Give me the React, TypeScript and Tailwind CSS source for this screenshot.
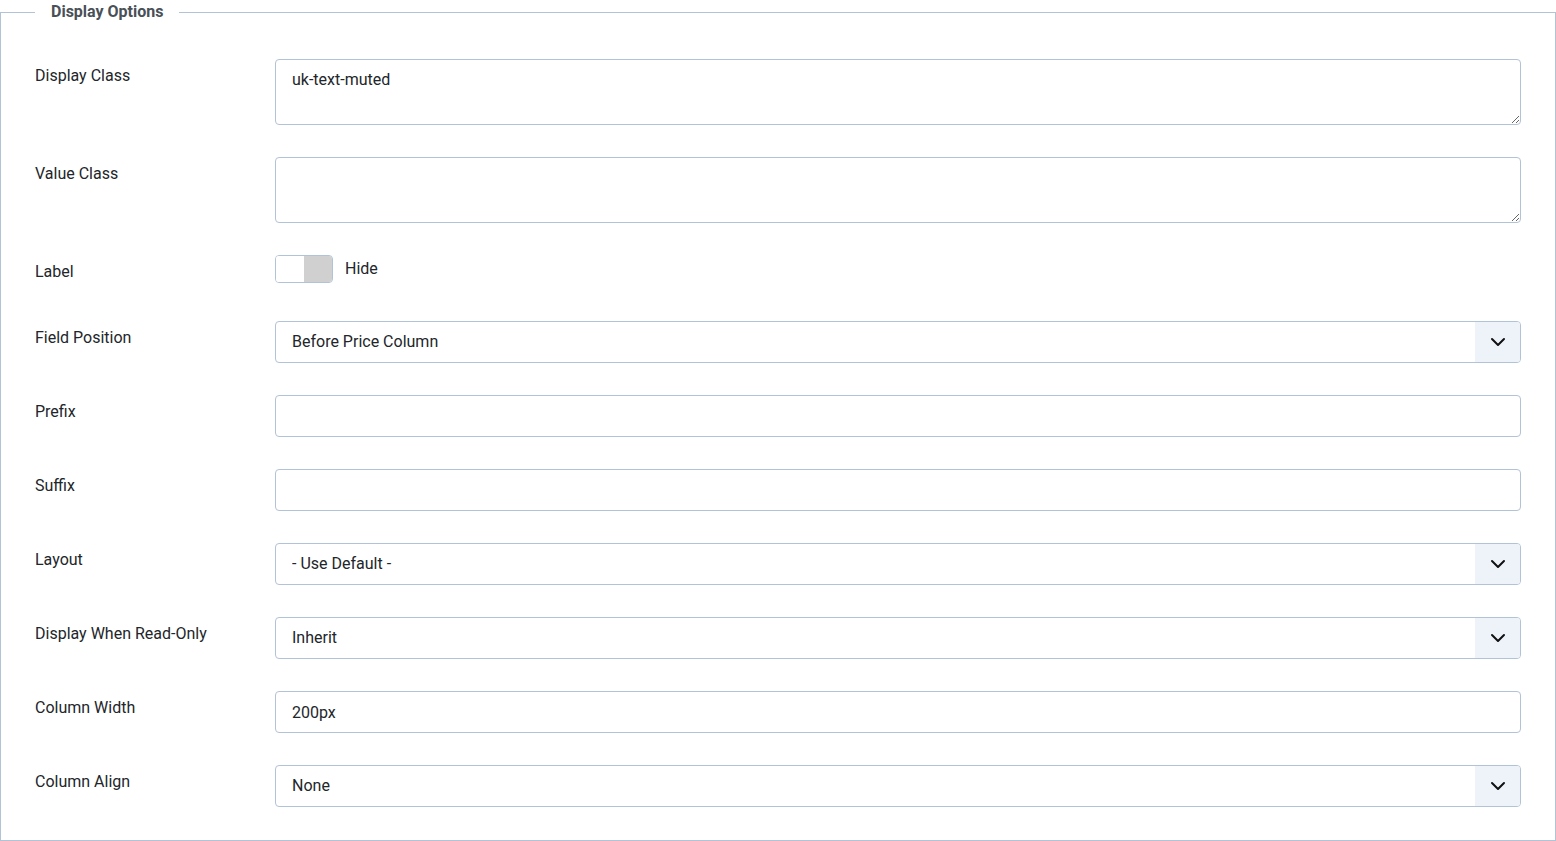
import { useState } from 'react';

type Row =
  | { label: string; kind: 'textarea'; value: string }
  | { label: string; kind: 'toggle' }
  | { label: string; kind: 'select'; value: string; options: string[] }
  | { label: string; kind: 'input'; value: string };

const rows: Row[] = [
  { label: 'Display Class', kind: 'textarea', value: 'uk-text-muted' },
  { label: 'Value Class', kind: 'textarea', value: '' },
  { label: 'Label', kind: 'toggle' },
  { label: 'Field Position', kind: 'select', value: 'Before Price Column', options: ['Before Price Column', 'After Price Column'] },
  { label: 'Prefix', kind: 'input', value: '' },
  { label: 'Suffix', kind: 'input', value: '' },
  { label: 'Layout', kind: 'select', value: '- Use Default -', options: ['- Use Default -'] },
  { label: 'Display When Read-Only', kind: 'select', value: 'Inherit', options: ['Inherit', 'Yes', 'No'] },
  { label: 'Column Width', kind: 'input', value: '200px' },
  { label: 'Column Align', kind: 'select', value: 'None', options: ['None', 'Left', 'Center', 'Right'] },
];

const fieldClass = "w-full border border-[#b2c3d8] rounded-[4px] bg-white px-4 text-base text-[#22262a] focus:outline-none focus:border-[#7f9ac0]";

function Chevron() {
  return (
    <svg width="16" height="16" viewBox="0 0 16 16" fill="none" stroke="#111" strokeWidth="2" strokeLinecap="round" strokeLinejoin="round">
      <polyline points="2,5 8,11 14,5" />
    </svg>
  );
}

function Toggle() {
  const [shown, setShown] = useState(false);
  return (
    <div className="h-[34px]">
      <div className="flex items-center gap-3 h-[28px]">
        <button type="button" onClick={() => setShown(!shown)} className="flex w-[58px] h-[28px] border border-[#b2c3d8] rounded-[4px] overflow-hidden">
          <span className={`flex-1 ${shown ? 'bg-[#d0d0d0]' : 'bg-white'}`} />
          <span className={`flex-1 ${shown ? 'bg-white' : 'bg-[#d0d0d0]'}`} />
        </button>
        <span className="text-base text-[#22262a] leading-6">{shown ? 'Show' : 'Hide'}</span>
      </div>
    </div>
  );
}

function Field({ row }: { row: Row }) {
  const [value, setValue] = useState('value' in row ? row.value : '');
  if (row.kind === 'textarea') {
    return <textarea value={value} onChange={e => setValue(e.target.value)} className={`${fieldClass} block h-[66px] py-2 leading-6`} />;
  }
  if (row.kind === 'toggle') return <Toggle />;
  if (row.kind === 'select') {
    return (
      <div className="relative">
        <select value={value} onChange={e => setValue(e.target.value)} className={`${fieldClass} appearance-none h-[42px] pr-12`}>
          {row.options.map(o => <option key={o} value={o}>{o}</option>)}
        </select>
        <div className="pointer-events-none absolute right-px top-px bottom-px w-[45px] bg-[#eef3fa] rounded-r-[3px] flex items-center justify-center">
          <Chevron />
        </div>
      </div>
    );
  }
  return <input type="text" value={value} onChange={e => setValue(e.target.value)} className={`${fieldClass} h-[42px]`} />;
}

export default function App() {
  return (
    <div className="bg-white min-h-screen" style={{ fontFamily: 'Roboto, "Noto Sans", sans-serif' }}>
      <fieldset className="border border-[#b2c3d8] px-[34px] pb-px">
        <legend className="px-4 text-base font-bold text-[#495057] leading-6">Display Options</legend>
        <div className="mt-[35px] flex flex-col">
          {rows.map(row => (
            <div key={row.label} className="flex mb-8">
              <label className="w-[240px] shrink-0 pt-[5px] text-base leading-6 text-[#22262a]">{row.label}</label>
              <div className="flex-1">
                <Field row={row} />
              </div>
            </div>
          ))}
        </div>
      </fieldset>
    </div>
  );
}
